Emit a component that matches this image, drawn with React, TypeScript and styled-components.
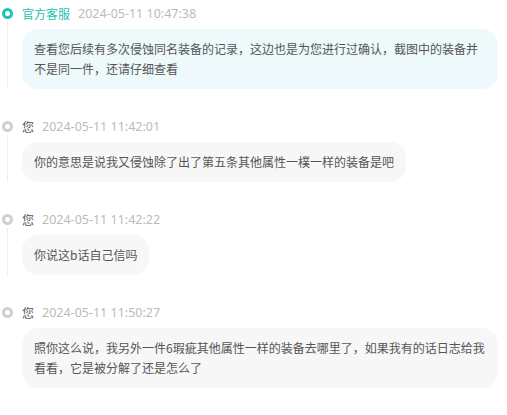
import React from 'react';
import styled, { createGlobalStyle } from 'styled-components';

const GlobalStyle = createGlobalStyle`
  html, body {
    margin: 0;
    padding: 0;
    background: #ffffff;
  }
  body {
    font-family: "Noto Sans CJK SC", "Noto Sans", sans-serif;
  }
`;

interface Message {
  from: 'staff' | 'user';
  name: string;
  time: string;
  text: string;
}

const messages: Message[] = [
  {
    from: 'staff',
    name: '官方客服',
    time: '2024-05-11 10:47:38',
    text: '查看您后续有多次侵蚀同名装备的记录，这边也是为您进行过确认，截图中的装备并不是同一件，还请仔细查看',
  },
  {
    from: 'user',
    name: '您',
    time: '2024-05-11 11:42:01',
    text: '你的意思是说我又侵蚀除了出了第五条其他属性一樸一样的装备是吧',
  },
  {
    from: 'user',
    name: '您',
    time: '2024-05-11 11:42:22',
    text: '你说这b话自己信吗',
  },
  {
    from: 'user',
    name: '您',
    time: '2024-05-11 11:50:27',
    text: '照你这么说，我另外一件6瑕疵其他属性一样的装备去哪里了，如果我有的话日志给我看看，它是被分解了还是怎么了',
  },
];

const Timeline = styled.div`
  padding: 6px 9px 0 0;
  display: flex;
  flex-direction: column;
`;

const Item = styled.div<{ $last?: boolean }>`
  display: flex;
  padding-bottom: ${p => (p.$last ? '0' : '30px')};
`;

const Rail = styled.div`
  width: 15px;
  flex-shrink: 0;
  display: flex;
  flex-direction: column;
  align-items: center;
  padding-top: 2px;
`;

const Dot = styled.span<{ $staff?: boolean }>`
  width: 11px;
  height: 11px;
  box-sizing: border-box;
  border-radius: 50%;
  border: 3.5px solid ${p => (p.$staff ? '#1cc6b3' : '#cfcfcf')};
  background: #ffffff;
  flex-shrink: 0;
`;

const Tail = styled.span<{ $hidden?: boolean }>`
  flex: 1;
  width: 1px;
  margin-top: 3px;
  background: ${p => (p.$hidden ? 'transparent' : '#eeeeee')};
`;

const Content = styled.div`
  flex: 1;
  min-width: 0;
  margin-left: 7px;
  display: flex;
  flex-direction: column;
  align-items: flex-start;
`;

const Header = styled.div`
  display: flex;
  align-items: center;
  gap: 8px;
  height: 16px;
  font-size: 12px;
  line-height: 16px;
`;

const Name = styled.span<{ $staff?: boolean }>`
  color: ${p => (p.$staff ? '#1cc2ae' : '#555555')};
`;

const Time = styled.span`
  color: #bbbbbb;
  font-family: "Noto Sans", sans-serif;
  font-size: 12.5px;
`;

const Bubble = styled.div<{ $staff?: boolean }>`
  margin-top: 7px;
  padding: 10px 12px;
  border-radius: 16px;
  background: ${p => (p.$staff ? '#edf9fa' : '#f7f7f8')};
  color: #555555;
  font-size: 12px;
  line-height: 20px;
  box-sizing: border-box;
  max-width: 100%;
`;

export default function App() {
  return (
    <>
      <GlobalStyle />
      <Timeline>
        {messages.map((m, i) => {
          const staff = m.from === 'staff';
          const last = i === messages.length - 1;
          return (
            <Item key={i} $last={last}>
              <Rail>
                <Dot $staff={staff} />
                <Tail $hidden={last} />
              </Rail>
              <Content>
                <Header>
                  <Name $staff={staff}>{m.name}</Name>
                  <Time>{m.time}</Time>
                </Header>
                <Bubble $staff={staff}>{m.text}</Bubble>
              </Content>
            </Item>
          );
        })}
      </Timeline>
    </>
  );
}
